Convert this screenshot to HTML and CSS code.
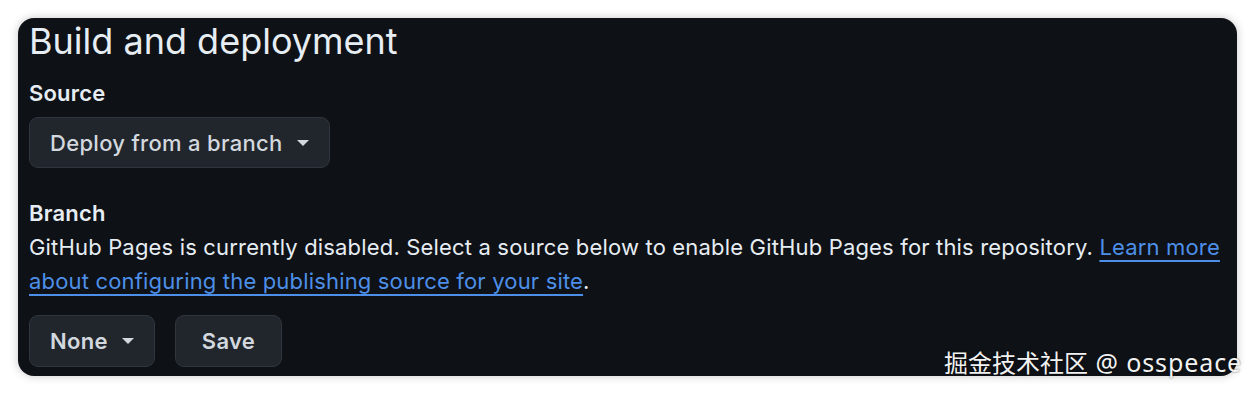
FILE: index.html
```html
<!DOCTYPE html>
<html lang="en">
<head>
<meta charset="utf-8">
<link rel="stylesheet" href="styles.css">
</head>
<body>
<div class="page">
  <section class="card">
    <h2 class="title">Build and deployment</h2>
    <div class="group">
      <div class="label">Source</div>
      <button class="btn btn-wide">Deploy from a branch <span class="caret"></span></button>
    </div>
    <div class="group group-branch">
      <div class="label">Branch</div>
      <p class="note">GitHub Pages is currently disabled. Select a source below to enable GitHub Pages for this repository. <a href="#">Learn more about configuring the publishing source for your site</a>.</p>
      <div class="actions">
        <button class="btn btn-none">None <span class="caret"></span></button>
        <button class="btn btn-save">Save</button>
      </div>
    </div>
  </section>
  <div class="watermark">掘金技术社区<span class="wm-latin"> @ osspeace</span></div>
</div>
</body>
</html>
```
FILE: styles.css
```css
html, body {
  margin: 0;
  padding: 0;
  background: #ffffff;
}
body {
  font-family: Inter, "Liberation Sans", "Noto Sans CJK SC", sans-serif;
}
.page {
  position: relative;
  width: 1255px;
  height: 394px;
  padding: 18px;
  box-sizing: border-box;
}
.card {
  width: 1219px;
  height: 358px;
  box-sizing: border-box;
  background: #0e1116;
  border-radius: 16px;
  box-shadow: 0 0 10px rgba(0, 0, 0, 0.22);
  padding: 0 11px;
  color: #e6edf3;
}
.title {
  margin: 0;
  font-size: 36px;
  font-weight: 400;
  line-height: 46px;
  letter-spacing: 0;
}
.group {
  margin-top: 16px;
}
.label {
  font-size: 22px;
  font-weight: 600;
  line-height: 26px;
  letter-spacing: 0.2px;
}
.btn {
  display: inline-flex;
  align-items: center;
  gap: 14px;
  height: 51px;
  box-sizing: border-box;
  margin-top: 11px;
  padding: 0 20px;
  border: 1px solid #30363d;
  border-radius: 9px;
  background: #21262d;
  color: #d2d8de;
  font-family: inherit;
  font-size: 22px;
  font-weight: 500;
  letter-spacing: 0.3px;
}
.btn-wide {
  width: 301px;
}
.btn-none {
  width: 126px;
  height: 52px;
  font-weight: 600;
}
.btn-save {
  width: 107px;
  height: 52px;
  justify-content: center;
  font-weight: 600;
}
.caret {
  width: 0;
  height: 0;
  border-left: 6px solid transparent;
  border-right: 6px solid transparent;
  border-top: 6px solid #d2d8de;
}
.group-branch {
  margin-top: 32px;
}
.note {
  margin: 4px 0 0;
  font-size: 22px;
  line-height: 34px;
  letter-spacing: 0.17px;
}
.note a {
  color: #4d8fe8;
  text-decoration: underline;
  text-underline-offset: 5px;
  text-decoration-thickness: 2px;
}
.actions {
  display: flex;
  gap: 20px;
  margin-top: 17px;
}
.actions .btn {
  margin-top: 0;
}
.watermark {
  position: absolute;
  left: 944px;
  top: 345px;
  font-size: 24px;
  line-height: 34px;
  color: #f2f2f2;
  font-family: "Noto Sans", "Noto Sans CJK SC", sans-serif;
  text-shadow: 0 0 2px rgba(0, 0, 0, 0.6);
  white-space: nowrap;
}
.wm-latin {
  font-size: 25px;
  letter-spacing: 0.9px;
}
```
